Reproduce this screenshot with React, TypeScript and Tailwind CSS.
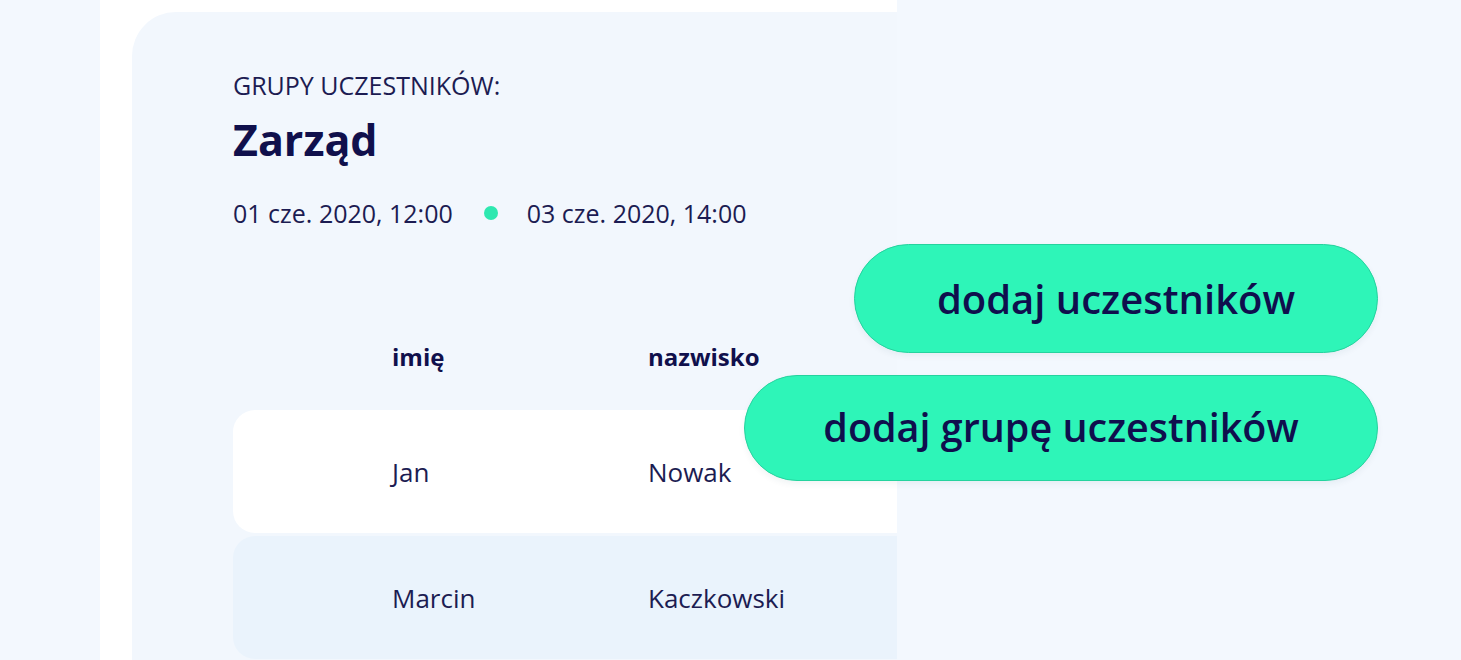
import React from "react";

const rows = [
  { first: "Jan", last: "Nowak", tone: "bg-white" },
  { first: "Marcin", last: "Kaczkowski", tone: "bg-[#eaf3fc]" },
];

export default function App() {
  return (
    <div
      className="relative h-[660px] w-full overflow-hidden bg-[#f3f8fe] text-[#15154f]"
      style={{ fontFamily: '"Open Sans", "Noto Sans", sans-serif' }}
    >
      <div className="flex h-full pl-[100px]">
        {/* white sheet holding the group card */}
        <div className="h-full w-[797px] bg-white pl-[32px] pt-[12px]">
          <div className="h-full overflow-hidden rounded-tl-[44px] bg-[#f2f7fd] pl-[101px] pt-[57px]">
            <div className="text-[25px] leading-[32px] text-[#1c1c52]">GRUPY UCZESTNIKÓW:</div>
            <h1 className="mt-[13px] text-[43px] font-bold leading-[52px] text-[#10104c]">Zarząd</h1>
            <div className="mt-[31px] flex items-center text-[25px] leading-[32px] text-[#1c1c52]">
              <span>01 cze. 2020, 12:00</span>
              <span className="ml-[31px] mr-[29px] h-[14px] w-[14px] rounded-full bg-[#2ee8b0]" />
              <span>03 cze. 2020, 14:00</span>
            </div>

            <div className="mt-[112px] grid grid-cols-[159px_256px_1fr] text-[24px] font-bold leading-[32px] text-[#10104c]">
              <span />
              <span>imię</span>
              <span>nazwisko</span>
            </div>

            <div className="mt-[37px] flex flex-col gap-[3px]">
              {rows.map((r) => (
                <div
                  key={r.first}
                  className={`grid h-[123px] grid-cols-[159px_256px_1fr] items-center rounded-l-[22px] text-[26px] leading-[34px] text-[#1c1c52] ${r.tone}`}
                >
                  <span />
                  <span>{r.first}</span>
                  <span>{r.last}</span>
                </div>
              ))}
            </div>
          </div>
        </div>
      </div>

      {/* floating action buttons */}
      <div className="absolute right-[83px] top-[244px] flex flex-col items-end gap-[22px]">
        <button className="flex h-[109px] w-[524px] items-center justify-center rounded-full border border-[#25d39e] bg-[#2ef5b8] text-[40px] font-semibold text-[#0f0f4d] shadow-[0_3px_6px_rgba(20,60,90,0.06)]">
          dodaj uczestników
        </button>
        <button className="flex h-[106px] w-[634px] items-center justify-center rounded-full border border-[#25d39e] bg-[#2ef5b8] text-[39.5px] font-semibold text-[#0f0f4d] shadow-[0_3px_6px_rgba(20,60,90,0.06)]">
          dodaj grupę uczestników
        </button>
      </div>
    </div>
  );
}
